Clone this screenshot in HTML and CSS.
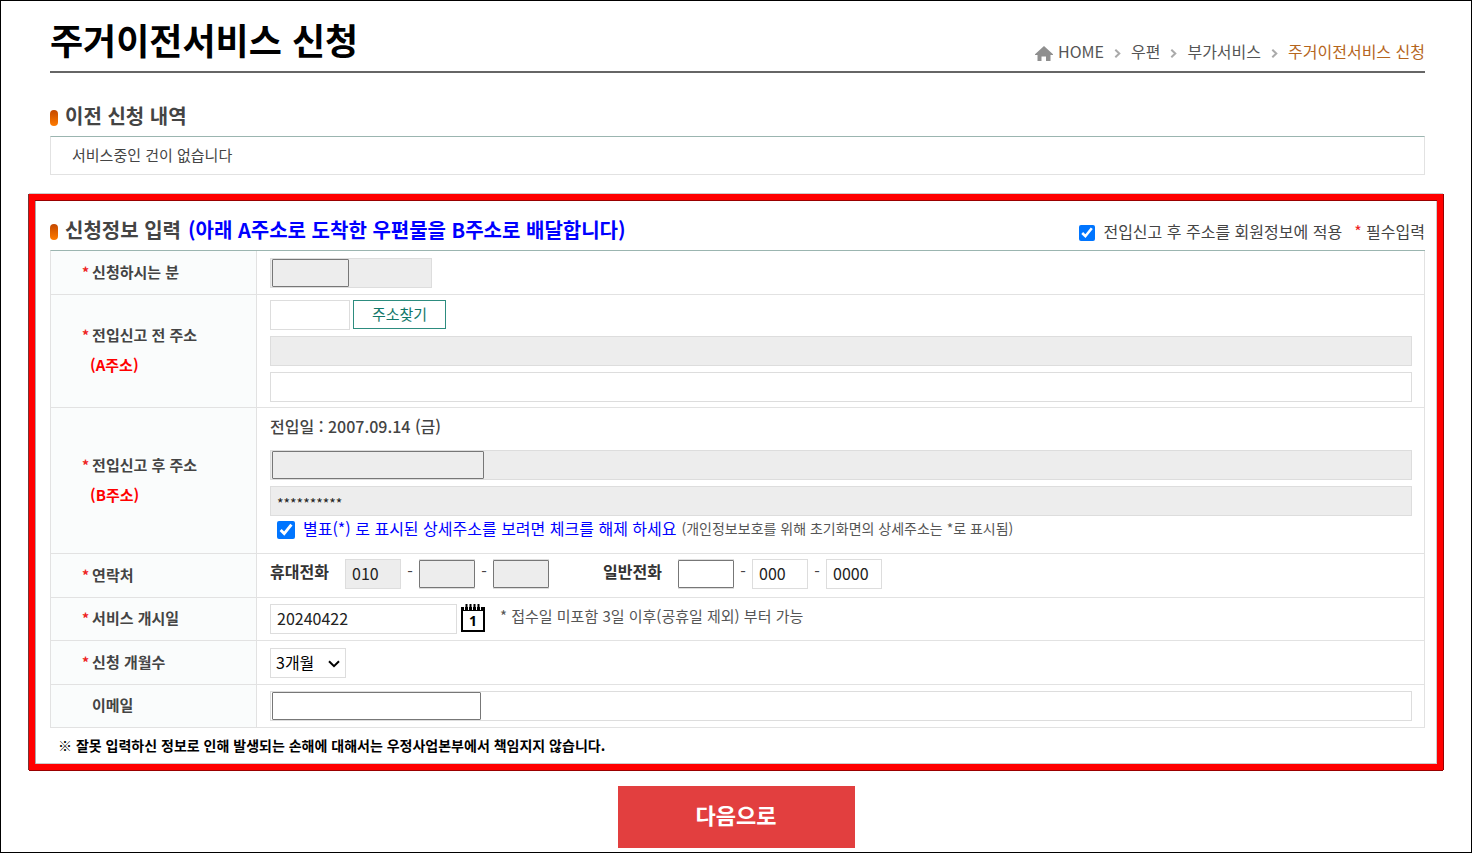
FILE: index.html
```html
<!DOCTYPE html>
<html lang="ko">
<head>
<meta charset="utf-8">
<meta name="viewport" content="width=device-width, initial-scale=1">
<title>주거이전서비스 신청</title>
<link rel="stylesheet" href="styles.css">
</head>
<body>
<div class="page">
  <header class="page-head">
    <h1 class="page-title">주거이전서비스 신청</h1>
    <nav class="crumbs" aria-label="현재 위치">
      <a class="crumb home" href="#"><svg class="home-icon" viewBox="0 0 18 15" aria-hidden="true"><path fill="#8f8f8f" d="M9 0 0 8.200V9h2.500v6H6.500v-4.500h4.500V15h4.500V9H18v-.8z"/></svg>HOME</a>
      <svg class="sep" viewBox="0 0 7 9" aria-hidden="true"><path d="M1.300.7 5.300 4.500 1.300 8.300"/></svg>
      <a class="crumb" href="#">우편</a>
      <svg class="sep" viewBox="0 0 7 9" aria-hidden="true"><path d="M1.300.7 5.300 4.500 1.300 8.300"/></svg>
      <a class="crumb" href="#">부가서비스</a>
      <svg class="sep" viewBox="0 0 7 9" aria-hidden="true"><path d="M1.300.7 5.300 4.500 1.300 8.300"/></svg>
      <a class="crumb current" href="#" aria-current="page">주거이전서비스 신청</a>
    </nav>
  </header>

  <section class="history">
    <h2 class="section-title">이전 신청 내역</h2>
    <p class="history-box">서비스중인 건이 없습니다</p>
  </section>

  <form class="frame" id="apply">
    <div class="form-head">
      <h2 class="section-title">신청정보 입력 <span class="blue">(아래 A주소로 도착한 우편물을 B주소로 배달합니다)</span></h2>
      <div class="form-options">
        <label class="check"><input class="box" type="checkbox" checked>전입신고 후 주소를 회원정보에 적용</label>
        <span><span class="star">*</span> 필수입력</span>
      </div>
    </div>

    <table class="form-table">
      <tr>
        <th scope="row"><label for="name"><span class="star">*</span>신청하시는 분</label></th>
        <td class="roomy"><div class="field name"><input class="input locked" id="name" type="text" readonly><span class="mask"></span></div></td>
      </tr>
      <tr>
        <th scope="row"><label for="zip"><span class="star">*</span>전입신고 전 주소</label><span class="addr-tag">(A주소)</span></th>
        <td class="tight">
          <div class="stack">
            <div class="line"><input class="input zip" id="zip" type="text"><button class="find" type="button">주소찾기</button></div>
            <input class="input locked" type="text" aria-label="전입신고 전 기본주소" readonly>
            <input class="input" type="text" aria-label="전입신고 전 상세주소">
          </div>
        </td>
      </tr>
      <tr>
        <th scope="row"><label for="after"><span class="star">*</span>전입신고 후 주소</label><span class="addr-tag">(B주소)</span></th>
        <td class="tight">
          <p class="move-date">전입일 : 2007.09.14 (금)</p>
          <div class="stack">
            <div class="field"><input class="input locked" id="after" type="text" readonly><span class="mask address"></span></div>
            <input class="input locked stars" type="text" value="**********" aria-label="전입신고 후 상세주소" readonly>
          </div>
          <div class="reveal">
            <label class="check blue"><input class="box large" type="checkbox" checked>별표(*) 로 표시된 상세주소를 보려면 체크를 해제 하세요</label>
            <span class="hint">(개인정보보호를 위해 초기화면의 상세주소는 *로 표시됨)</span>
          </div>
        </td>
      </tr>
      <tr>
        <th scope="row"><span class="star">*</span>연락처</th>
        <td class="high">
          <div class="phones">
            <div class="phone">
              <label class="phone-label" for="mobile">휴대전화</label>
              <input class="input part locked" id="mobile" type="text" value="010" readonly>
              <span class="dash">-</span>
              <div class="field part"><input class="input locked" type="text" aria-label="휴대전화 가운데 자리" readonly><span class="mask full"></span></div>
              <span class="dash">-</span>
              <div class="field part"><input class="input locked" type="text" aria-label="휴대전화 끝자리" readonly><span class="mask full"></span></div>
            </div>
            <div class="phone">
              <label class="phone-label" for="tel">일반전화</label>
              <div class="field part"><input class="input" id="tel" type="text"><span class="mask full white"></span></div>
              <span class="dash">-</span>
              <input class="input part" type="text" value="000" aria-label="일반전화 가운데 자리">
              <span class="dash">-</span>
              <input class="input part" type="text" value="0000" aria-label="일반전화 끝자리">
            </div>
          </div>
        </td>
      </tr>
      <tr>
        <th scope="row"><label for="start"><span class="star">*</span>서비스 개시일</label></th>
        <td>
          <div class="line">
            <input class="input date" id="start" type="text" value="20240422">
            <button class="calendar" type="button" aria-label="날짜 선택"><svg viewBox="0 0 24 28" aria-hidden="true"><path fill="#fff" stroke="#000" stroke-width="2" d="M1 4h22v23H1z"/><path d="M0 3h24v4H0z"/><path stroke="#fff" stroke-width="1" d="M3.500 0v6M7.500 0v6M11.500 0v6M15.500 0v6M19.500 0v6"/><path stroke="#000" stroke-width="2" d="M5.500 0v6M9.500 0v6M13.500 0v6M17.500 0v6"/><text x="12" y="22" text-anchor="middle" class="day">1</text></svg></button>
            <span class="hint date-hint">* 접수일 미포함 3일 이후(공휴일 제외) 부터 가능</span>
          </div>
        </td>
      </tr>
      <tr>
        <th scope="row"><label for="months"><span class="star">*</span>신청 개월수</label></th>
        <td class="roomy"><div class="field months"><select class="select" id="months"><option>3개월</option></select><svg class="arrow" viewBox="0 0 12 8" aria-hidden="true"><path d="M1 1.200 6 6.200 11 1.200"/></svg></div></td>
      </tr>
      <tr>
        <th scope="row"><label class="optional" for="email">이메일</label></th>
        <td><div class="field"><input class="input" id="email" type="email"><span class="mask email white"></span></div></td>
      </tr>
    </table>
    <p class="notice">※ 잘못 입력하신 정보로 인해 발생되는 손해에 대해서는 우정사업본부에서 책임지지 않습니다.</p>
  </form>

  <button class="next" type="submit" form="apply">다음으로</button>
</div>
</body>
</html>
```
FILE: styles.css
```css
*, *::before { box-sizing: border-box; }

body {
  margin: 0;
  background: #fff;
  color: #444;
  font: 16px/24px "Noto Sans CJK KR", "Noto Sans", sans-serif;
}

h1, h2, p { margin: 0; }
input, button, select { font: inherit; margin: 0; }
svg { display: block; }

.page {
  min-height: 100vh;
  border: 1px solid #000;
  padding-bottom: 4px;
}

.page-head {
  display: flex;
  justify-content: space-between;
  align-items: flex-end;
  margin: 0 46px 0 49px;
  padding-top: 9px;
  border-bottom: 2px solid #666;
}

.page-title {
  padding-bottom: 3px;
  color: #000;
  font-size: 36px;
  line-height: 58px;
}

.crumbs {
  display: flex;
  align-items: center;
  gap: 10px;
  padding-bottom: 8px;
}

.crumb { color: #555; text-decoration: none; }
.crumb.current { color: #b5651d; }
.home { display: flex; align-items: center; gap: 5px; }
.home-icon { width: 18px; height: 15px; margin-top: 4px; }

.sep {
  width: 7px;
  height: 9px;
  margin-top: 4px;
  fill: none;
  stroke: #aaa;
  stroke-width: 2;
}

.history { margin: 27px 46px 0 49px; }

.section-title {
  display: flex;
  align-items: center;
  gap: 7px;
  padding-bottom: 4px;
  font-size: 20px;
  line-height: 32px;
}

.section-title::before {
  content: "";
  width: 8px;
  height: 16px;
  margin-top: 4px;
  border-radius: 4px;
  background: linear-gradient(#c44800, #ff7b00);
}

.history-box {
  padding: 6px 21px 7px;
  border: 1px solid #e2e2e2;
  border-top-color: #9bb5b0;
  font-size: 15px;
}

.frame {
  margin: 19px 28px 0;
  padding: 14px 12px 0 15px;
  border: 6px solid #f00;
  box-shadow: 0 1px #900, 1px 0 #900, -1px 0 #733, 0 -1px #ccc,
    inset 0 1px #900, inset 1px 0 #aaa, inset -1px 0 #ccc, inset 0 -1px #ccc;
}

.form-head { display: flex; justify-content: space-between; align-items: center; }
.form-options { display: flex; gap: 12px; padding-bottom: 2px; }
.blue { color: #00f; }
.star { color: #e22; }
.check { display: flex; align-items: center; gap: 8px; }
.box { width: 16px; height: 16px; margin-top: 4px; }
.box.large { width: 18px; height: 18px; }

.form-table {
  width: 100%;
  table-layout: fixed;
  border-collapse: separate;
  border-spacing: 0;
  border-top: 1px solid #9bb5b0;
  border-left: 1px solid #e2e2e2;
}

th, td {
  border: solid #e2e2e2;
  border-width: 0 1px 1px 0;
}

th {
  width: 206px;
  padding: 0 0 2px 31px;
  background: #fafcfc;
  font-size: 15px;
  line-height: 30px;
  text-align: left;
}

th .star { margin-right: 3px; font-size: 14px; }
.addr-tag { display: block; padding-left: 8px; color: #f00; }
.optional { padding-left: 10px; }

td { padding: 6px 12px 6px 13px; }
td.roomy { padding-top: 7px; }
td.tight { padding-top: 5px; padding-bottom: 5px; }
td.high { padding-top: 5px; padding-bottom: 8px; }

.input {
  display: block;
  width: 100%;
  height: 30px;
  padding: 0 6px 2px;
  border: 1px solid #ddd;
  border-radius: 0;
  background: #fff;
  color: #222;
}

.locked { background: #ededed; }
.input.stars { padding: 4px 6px 0; font-size: 14px; }
.stack { display: grid; gap: 6px; }
.line { display: flex; gap: 3px; }
.line .zip { width: 80px; }
.line .date { width: 187px; }
.field { position: relative; }
.field.name { width: 162px; }

.mask {
  position: absolute;
  inset: 1px auto 1px 2px;
  width: 77px;
  border: 1px solid #777;
  border-radius: 1px;
  background: #ededed;
}

.mask.address { width: 212px; }
.mask.email { width: 209px; }
.mask.full { left: 0; width: 100%; }
.mask.white { background: #fff; }

.find {
  width: 93px;
  height: 29px;
  padding: 0 0 2px;
  border: 1px solid #2d8c7f;
  background: #fff;
  color: #12776a;
  font-size: 15px;
  line-height: 24px;
}

.move-date {
  padding-bottom: 11px;
  font-weight: 500;
  line-height: 26px;
}

.reveal {
  display: flex;
  align-items: center;
  gap: 5px;
  padding: 0 0 8px 7px;
}

.hint { color: #555; font-size: 14px; }

.phones { display: flex; gap: 54px; }
.phone { display: flex; }
.phone-label { width: 75px; color: #333; font-weight: 700; }
.phone .part { width: 56px; padding-right: 0; }
.dash { width: 18px; text-align: center; }

.calendar {
  width: 24px;
  height: 28px;
  margin-left: 1px;
  padding: 0;
  border: 0;
  background: none;
}

.day { font: 700 14px "Noto Sans", sans-serif; }
.date-hint { margin-left: 12px; font-size: 15px; }

.months { width: 76px; }

.select {
  display: block;
  width: 100%;
  height: 30px;
  padding: 0 5px 2px;
  border: 1px solid #ddd;
  border-radius: 0;
  appearance: none;
  background: #fff;
  color: #000;
}

.arrow {
  position: absolute;
  top: 12px;
  right: 6px;
  width: 12px;
  height: 8px;
  fill: none;
  stroke: #000;
  stroke-width: 2;
  pointer-events: none;
}

.notice {
  padding: 0 0 2px 8px;
  color: #000;
  font-size: 14px;
  font-weight: 700;
  line-height: 34px;
}

.next {
  display: block;
  width: 237px;
  height: 62px;
  margin: 16px auto 0;
  padding: 0 0 6px;
  border: 0;
  background: #e23f3f;
  color: #fff;
  font-size: 22px;
  font-weight: 700;
}
```
